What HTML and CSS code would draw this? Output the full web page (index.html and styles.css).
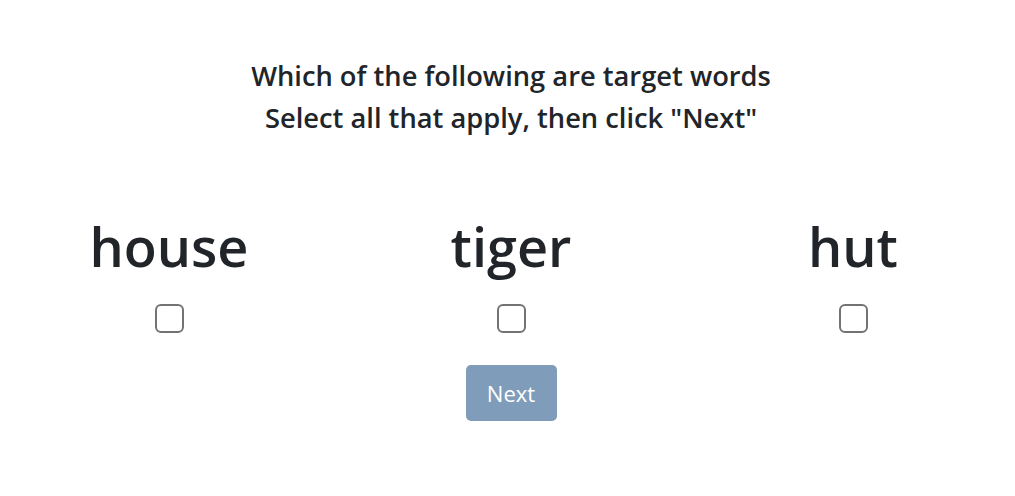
FILE: index.html
```html
<!DOCTYPE html>
<html lang="en">
<head>
<meta charset="utf-8">
<title>Target words</title>
<link rel="stylesheet" href="styles.css">
</head>
<body>
<main class="page">
  <div class="prompt">
    <p class="prompt-line">Which of the following are target words</p>
    <p class="prompt-line">Select all that apply, then click "Next"</p>
  </div>
  <div class="options">
    <label class="option">
      <span class="word">house</span>
      <input type="checkbox" class="check">
    </label>
    <label class="option">
      <span class="word">tiger</span>
      <input type="checkbox" class="check">
    </label>
    <label class="option">
      <span class="word">hut</span>
      <input type="checkbox" class="check">
    </label>
  </div>
  <div class="actions">
    <button type="button" class="next-btn">Next</button>
  </div>
</main>
</body>
</html>
```
FILE: styles.css
```css
html, body {
  margin: 0;
  padding: 0;
  background: #ffffff;
}
body {
  font-family: "Open Sans", "Noto Sans", "Liberation Sans", sans-serif;
  color: #212529;
}
.page {
  padding: 55px 0 0 7px;
}
.prompt {
  text-align: center;
}
.prompt-line {
  margin: 0;
  font-size: 27.3px;
  line-height: 42px;
  font-weight: 600;
}
.options {
  display: grid;
  grid-template-columns: repeat(3, 342px);
  justify-content: center;
  margin-top: 74px;
}
.option {
  display: flex;
  flex-direction: column;
  align-items: center;
}
.word {
  font-size: 54px;
  line-height: 67px;
  font-weight: 600;
}
.check {
  appearance: none;
  -webkit-appearance: none;
  margin: 24px 0 0;
  width: 29px;
  height: 29px;
  border: 2px solid #737373;
  border-radius: 6px;
  background: #fff;
  box-sizing: border-box;
}
.actions {
  display: flex;
  justify-content: center;
  margin-top: 32px;
}
.next-btn {
  font-family: inherit;
  font-size: 22px;
  color: #ffffff;
  background: #7f9dbb;
  border: none;
  border-radius: 5px;
  width: 91px;
  height: 56px;
  padding: 0;
}
```
